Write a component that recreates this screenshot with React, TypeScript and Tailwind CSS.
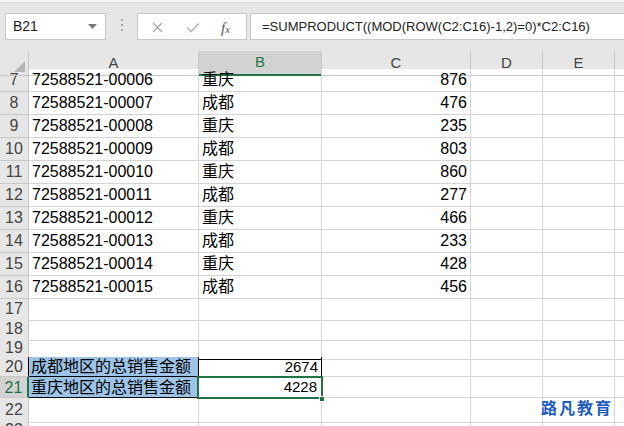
import React from 'react';

const FONT = '"Liberation Sans", "Noto Sans CJK SC", sans-serif';

type Row = { n: number; a?: string; b?: string; c?: string; h: number };

const data: Row[] = [
  { n: 7, a: '72588521-00006', b: '重庆', c: '876', h: 23 },
  { n: 8, a: '72588521-00007', b: '成都', c: '476', h: 23 },
  { n: 9, a: '72588521-00008', b: '重庆', c: '235', h: 23 },
  { n: 10, a: '72588521-00009', b: '成都', c: '803', h: 23 },
  { n: 11, a: '72588521-00010', b: '重庆', c: '860', h: 23 },
  { n: 12, a: '72588521-00011', b: '成都', c: '277', h: 23 },
  { n: 13, a: '72588521-00012', b: '重庆', c: '466', h: 23 },
  { n: 14, a: '72588521-00013', b: '成都', c: '233', h: 23 },
  { n: 15, a: '72588521-00014', b: '重庆', c: '428', h: 23 },
  { n: 16, a: '72588521-00015', b: '成都', c: '456', h: 23 },
  { n: 17, h: 20 },
  { n: 18, h: 19 },
  { n: 19, h: 19 },
];

const cols = 'grid grid-cols-[29px_170px_123px_149px_72px_72px_1fr]';

const Toolbar: React.FC = () => (
  <div className="h-[51px] bg-[#e6e6e6] border-t-[2px] border-[#f4f4f4] relative">
    <div className="absolute left-0 right-0 top-0 h-px bg-[#d9d9d9]" />
    {/* name box */}
    <div className="absolute left-[5px] top-[11px] w-[101px] h-[27px] bg-white border border-[#c6c6c6] flex items-center pl-[7px] text-[14px] text-[#222]">
      B21
      <svg className="absolute right-[8px] top-[10px]" width="9" height="5" viewBox="0 0 9 5">
        <path d="M0 0 L9 0 L4.5 5 Z" fill="#777" />
      </svg>
    </div>
    {/* dots */}
    <div className="absolute left-[121px] top-[17px] flex flex-col gap-[3px]">
      <span className="w-[2px] h-[2px] bg-[#a6a6a6]" />
      <span className="w-[2px] h-[2px] bg-[#a6a6a6]" />
      <span className="w-[2px] h-[2px] bg-[#a6a6a6]" />
    </div>
    {/* fx buttons */}
    <div className="absolute left-[137px] top-[11px] w-[110px] h-[27px] bg-white border border-[#c6c6c6]">
      <svg className="absolute left-[14px] top-[8px]" width="11" height="11" viewBox="0 0 11 11">
        <path d="M1 1 L10 10 M10 1 L1 10" stroke="#a8a8a8" strokeWidth="1.3" />
      </svg>
      <svg className="absolute left-[48px] top-[8px]" width="14" height="11" viewBox="0 0 14 11">
        <path d="M1 5.5 L5 9.5 L13 1.5" stroke="#b4b4b4" strokeWidth="1.6" fill="none" />
      </svg>
      <span
        className="absolute left-[83px] top-[3px] text-[15px] italic text-[#555]"
        style={{ fontFamily: '"Liberation Serif", serif' }}
      >
        f<span className="text-[11px]">x</span>
      </span>
    </div>
    {/* formula */}
    <div className="absolute left-[250px] right-[-4px] top-[11px] h-[27px] bg-white border border-[#c6c6c6] flex items-center pl-[11px] text-[13px] text-[#222] whitespace-nowrap overflow-hidden">
      =SUMPRODUCT((MOD(ROW(C2:C16)-1,2)=0)*C2:C16)
    </div>
  </div>
);

const Header: React.FC = () => (
  <div className={`${cols} h-[18px] bg-[#e6e6e6] text-[15px] text-[#444]`}>
    <div className="relative border-r border-b border-[#c8c8c8]">
      <svg className="absolute right-[3px] bottom-[3px]" width="11" height="11" viewBox="0 0 11 11">
        <path d="M11 0 L11 11 L0 11 Z" fill="#b5b5b5" />
      </svg>
    </div>
    <div className="border-r border-b border-[#c8c8c8] flex items-center justify-center">A</div>
    <div className="bg-[#d2d2d2] border-r border-[#c8c8c8] border-b-2 border-b-[#217346] flex items-center justify-center text-[#217346]">B</div>
    <div className="border-r border-b border-[#c8c8c8] flex items-center justify-center">C</div>
    <div className="border-r border-b border-[#c8c8c8] flex items-center justify-center">D</div>
    <div className="border-r border-b border-[#c8c8c8] flex items-center justify-center">E</div>
    <div className="border-b border-[#c8c8c8]" />
  </div>
);

const cell = 'border-r border-b border-[#d4d4d4] flex items-end pb-[1px] px-[3px] overflow-hidden whitespace-nowrap';

export default function App() {
  return (
    <div className="w-[624px] h-[426px] overflow-hidden bg-white relative" style={{ fontFamily: FONT }}>
      <Toolbar />
      <Header />
      {data.map((r) => (
        <div key={r.n} className={`${cols} text-[16px] text-black leading-[20px]`} style={{ height: r.h }}>
          <div className={`bg-[#e6e6e6] border-r border-b border-[#c8c8c8] flex items-end justify-center text-[16px] text-[#444] pb-[1px] ${r.n === 19 ? 'border-b-black' : ''}`}>
            {r.n}
          </div>
          <div className={`${cell} ${r.n === 19 ? 'border-b-black' : ''}`}>{r.a}</div>
          <div className={`${cell} ${r.n === 19 ? 'border-b-black' : ''}`}>{r.b}</div>
          <div className={`${cell} justify-end`}>{r.c}</div>
          <div className={cell} />
          <div className={cell} />
          <div className="border-b border-[#d4d4d4]" />
        </div>
      ))}
      {/* row 20 */}
      <div className={`${cols} h-[20px] text-[16px] leading-[19px]`}>
        <div className="bg-[#e6e6e6] border-r border-r-black border-b border-[#c8c8c8] flex items-end justify-center text-[16px] text-[#444]">20</div>
        <div className="bg-[#9dc3e6] border-r border-b border-black flex items-end px-[2px] whitespace-nowrap">成都地区的总销售金额</div>
        <div className="border-r border-b border-black flex items-end justify-end px-[3px] text-[15px]">2674</div>
        <div className={cell} />
        <div className={cell} />
        <div className={cell} />
        <div className="border-b border-[#d4d4d4]" />
      </div>
      {/* row 21 */}
      <div className={`${cols} h-[21px] text-[16px] leading-[19px]`}>
        <div className="bg-[#d2d2d2] border-r-2 border-r-[#217346] border-b border-[#c8c8c8] flex items-end justify-center text-[16px] text-[#217346]">21</div>
        <div className="bg-[#9dc3e6] border-r border-b border-black flex items-end px-[2px] whitespace-nowrap">重庆地区的总销售金额</div>
        <div className="relative border-r border-b border-black flex items-end justify-end px-[4px] pb-[1px] text-[15px]">
          4228
          <div className="absolute left-[-2px] top-[-1px] right-[-2px] bottom-[-2px] border-2 border-[#217346]" />
          <div className="absolute right-[-4px] bottom-[-5px] w-[6px] h-[6px] bg-[#217346] border border-white" />
        </div>
        <div className={cell} />
        <div className={cell} />
        <div className={cell} />
        <div className="border-b border-[#d4d4d4]" />
      </div>
      {[22, 23].map((n) => (
        <div key={n} className={`${cols} h-[20px] text-[16px]`}>
          <div className="bg-[#e6e6e6] border-r border-b border-[#c8c8c8] flex items-end justify-center text-[16px] text-[#444]">{n}</div>
          <div className={cell} />
          <div className={cell} />
          <div className={cell} />
          <div className={cell} />
          <div className={cell} />
          <div className="border-b border-[#d4d4d4]" />
        </div>
      ))}
      <div
        className="absolute left-[541px] top-[398px] text-[16px] font-bold text-[#1d5cc0] tracking-[2px] leading-[18px]"
        style={{ fontFamily: '"Noto Sans CJK SC", sans-serif' }}
      >
        路凡教育
      </div>
    </div>
  );
}
